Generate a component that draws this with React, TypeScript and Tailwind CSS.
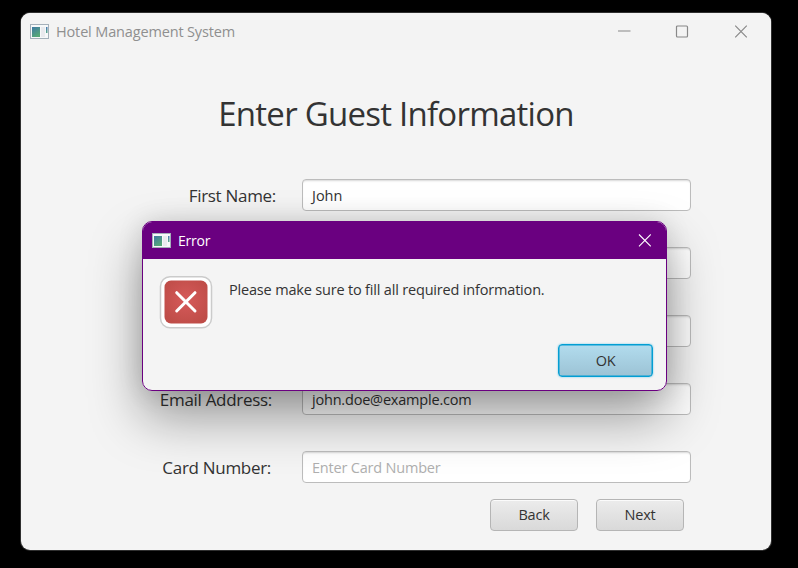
import React from "react";

function AppIcon() {
  return (
    <svg className="block shrink-0" width="19" height="16" viewBox="0 0 19 16">
      <defs>
        <linearGradient id="pane" x1="0" y1="0" x2="0.5" y2="1">
          <stop offset="0" stopColor="#3f78a4" />
          <stop offset="1" stopColor="#55a878" />
        </linearGradient>
        <linearGradient id="strip" x1="0" y1="0" x2="0" y2="1">
          <stop offset="0" stopColor="#4a78b4" />
          <stop offset="1" stopColor="#58a888" />
        </linearGradient>
      </defs>
      <rect x="0.5" y="0.5" width="18" height="14" fill="#f6f8f9" stroke="#a4b0ba" />
      <rect x="2" y="3" width="8" height="10" fill="url(#pane)" />
      <rect x="11" y="3" width="4" height="10" fill="#e9eaee" />
      <rect x="16" y="3" width="1.5" height="6" fill="url(#strip)" />
    </svg>
  );
}

function ErrorIcon() {
  return (
    <svg className="block shrink-0" width="54" height="54" viewBox="0 0 54 54">
      <defs>
        <radialGradient id="red" cx="0.5" cy="0.45" r="0.6">
          <stop offset="0" stopColor="#d65a5a" />
          <stop offset="1" stopColor="#bf4d48" />
        </radialGradient>
      </defs>
      <rect x="1.5" y="1.7" width="51" height="51" rx="9.5" fill="#fff" stroke="#cbcbcb" strokeWidth="1.5" />
      <rect x="5.5" y="5.5" width="43" height="43" rx="6.5" fill="url(#red)" />
      <path d="M17.7 17.7 36 36M36 17.7 17.7 36" stroke="#fff" strokeWidth="3" strokeLinecap="round" />
    </svg>
  );
}

interface RowProps {
  label?: string;
  labelClass?: string;
  value?: string;
  valueClass?: string;
}

function Row({ label, labelClass = "", value, valueClass = "" }: RowProps) {
  return (
    <div className="flex h-8 items-center">
      <div className="w-[281px] shrink-0 pt-px text-right text-[17px] leading-8 whitespace-nowrap">
        <span className={labelClass}>{label}</span>
      </div>
      <div className="h-8 w-[389px] rounded-[4px] border border-[#bcbcbc] bg-white px-[9px] text-[14.5px] leading-[31px] whitespace-nowrap shadow-[inset_0_2px_2px_-1px_#d8d8d8]">
        <span className={valueClass}>{value}</span>
      </div>
    </div>
  );
}

function FormButton({ children }: { children: React.ReactNode }) {
  return (
    <div className="h-8 w-[88px] rounded-[4px] border border-[#b5b5b5] bg-linear-to-b from-[#ececec] to-[#d9d9d9] text-center text-[14.5px] leading-[29px] tracking-[-0.2px] shadow-[inset_0_1px_0_#fbfbfb]">
      {children}
    </div>
  );
}

function Dialog() {
  return (
    <div className="absolute top-[208px] left-[121px] h-[170px] w-[525px] rounded-[10px] shadow-[0_26px_52px_rgba(0,0,0,0.38),0_0_26px_rgba(0,0,0,0.12)]">
      <div className="flex h-full flex-col overflow-hidden rounded-[10px] border border-[#6a0080] bg-[#f4f4f4]">
        <div className="flex h-[37px] shrink-0 items-center bg-[#6a0080] pr-[15px] pl-[9px] text-white">
          <AppIcon />
          <span className="ml-[7px] text-[14px] tracking-[-0.2px]">Error</span>
          <svg className="ml-auto block" width="13" height="13" viewBox="0 0 13 13">
            <path d="M1 .5 12.8 12.3M12.8.5 1 12.3" stroke="#fff" strokeWidth="1.1" />
          </svg>
        </div>
        <div className="flex pt-[16px] pl-[16px]">
          <ErrorIcon />
          <span className="ml-[16px] pt-[3px] text-[14.5px] leading-6 tracking-[-0.18px] whitespace-nowrap">
            Please make sure to fill all required information.
          </span>
        </div>
        <div className="mt-[15px] flex justify-end pr-[13px]">
          <div className="h-[33px] w-[95px] rounded-[4px] border border-[#039ed3] bg-linear-to-b from-[#b2dcee] to-[#9cc3d5] text-center text-[14.5px] leading-[32px] tracking-[-0.3px] shadow-[0_0_2px_#63c5e8,inset_0_0_0_0.5px_#039ed3]">
            OK
          </div>
        </div>
      </div>
    </div>
  );
}

export default function App() {
  return (
    <div className="h-[568px] w-[798px] overflow-hidden bg-black pt-[13px] pl-[21px] font-['Open_Sans','Noto_Sans',sans-serif] text-[#333]">
      <div className="relative flex h-[537px] w-[750px] flex-col overflow-hidden rounded-[9px] bg-[#f4f4f4] shadow-[0_0_0_1px_#303030]">
        <div className="flex h-[37px] shrink-0 items-center bg-[#f3f3f3] pr-[23px] pl-[9px] text-[#8f8f8f]">
          <AppIcon />
          <span className="ml-[7px] text-[14.5px] tracking-[-0.15px]">Hotel Management System</span>
          <svg className="ml-auto block" width="130" height="13" viewBox="0 0 130 13" fill="none" stroke="#888" strokeWidth="1.2">
            <path d="M0 6H12.5M117.2.7 128.8 12.3M128.8.7 117.2 12.3" />
            <rect x="58.5" y="1" width="11" height="11" rx="1" />
          </svg>
        </div>
        <h1 className="mt-[40px] h-[48px] text-center text-[33px] leading-[48px] font-normal tracking-[-0.75px] whitespace-nowrap">
          Enter Guest Information
        </h1>
        <div className="mt-[41px] flex flex-col gap-9">
          <Row label="First Name:" labelClass="mr-[26px] tracking-[-0.3px]" value="John" valueClass="tracking-[0px]" />
          <Row />
          <Row />
          <Row label="Email Address:" labelClass="mr-[30px] tracking-[-0.3px]" value="john.doe@example.com" valueClass="tracking-[-0.2px]" />
          <Row label="Card Number:" labelClass="mr-[31px] tracking-[-0.3px]" value="Enter Card Number" valueClass="tracking-[-0.2px] text-[#afafaf]" />
        </div>
        <div className="mt-4 flex gap-[18px] pl-[469px]">
          <FormButton>Back</FormButton>
          <FormButton>Next</FormButton>
        </div>
        <Dialog />
      </div>
    </div>
  );
}
